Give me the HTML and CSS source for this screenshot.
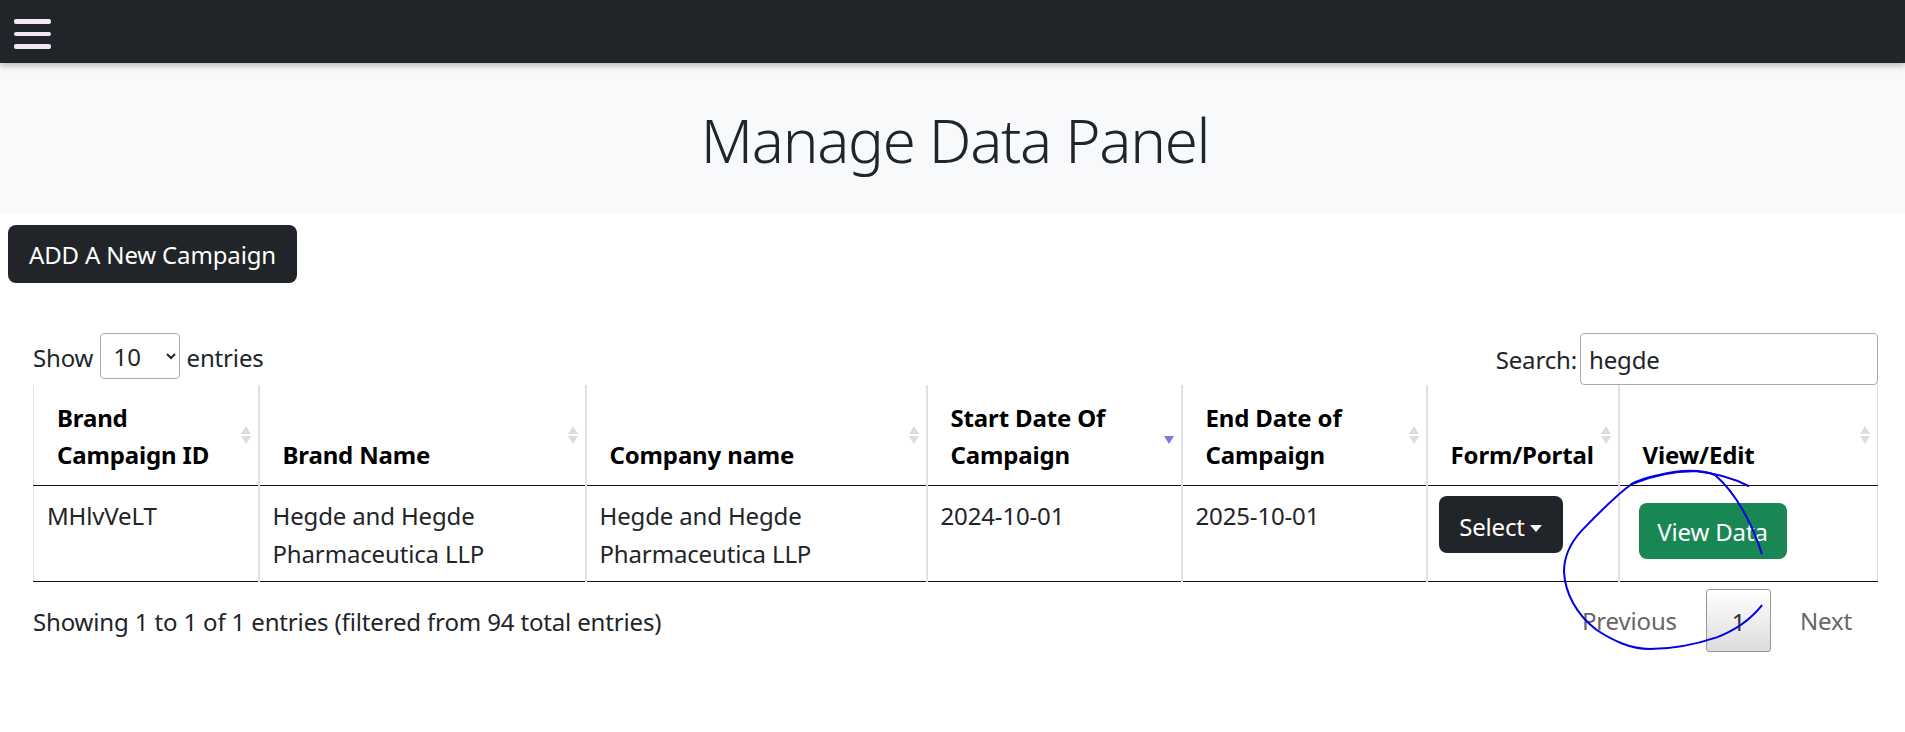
FILE: index.html
```html
<!DOCTYPE html>
<html lang="en">
<head>
  <meta charset="UTF-8">
  <meta name="viewport" content="width=device-width, initial-scale=1.0">
  <title>Manage Data Panel</title>
  <link rel="stylesheet" href="styles.css">
</head>
<body>
  <nav class="topbar">
    <button class="menu-toggle" type="button" aria-label="Menu">
      <span></span>
      <span></span>
      <span></span>
    </button>
  </nav>

  <header class="hero">
    <h1>Manage Data Panel</h1>
  </header>

  <a class="btn btn-dark btn-add" href="#">ADD A New Campaign</a>

  <section class="table-wrapper">
    <div class="table-top">
      <label class="length">Show
        <select>
          <option>10</option>
          <option>25</option>
          <option>50</option>
        </select>
        entries</label>
      <label class="search">Search:
        <input type="search" value="hegde">
      </label>
    </div>

    <table class="data-table">
      <thead>
        <tr>
          <th class="sorting col-id">Brand<br>Campaign ID</th>
          <th class="sorting col-brand">Brand Name</th>
          <th class="sorting col-company">Company name</th>
          <th class="sorting sorting-desc col-start">Start Date Of<br>Campaign</th>
          <th class="sorting col-end">End Date of<br>Campaign</th>
          <th class="sorting col-form">Form/Portal</th>
          <th class="sorting col-view">View/Edit</th>
        </tr>
      </thead>
      <tbody>
        <tr>
          <td>MHlvVeLT</td>
          <td>Hegde and Hegde<br>Pharmaceutica LLP</td>
          <td>Hegde and Hegde<br>Pharmaceutica LLP</td>
          <td>2024-10-01</td>
          <td>2025-10-01</td>
          <td class="cell-select"><button class="btn btn-dark btn-select" type="button">Select<i class="caret"></i></button></td>
          <td class="cell-view"><a class="btn btn-success" href="#">View Data</a></td>
        </tr>
      </tbody>
    </table>

    <div class="table-bottom">
      <div class="info">Showing 1 to 1 of 1 entries (filtered from 94 total entries)</div>
      <div class="paginate">
        <a class="page-link" href="#">Previous</a>
        <a class="page-link current" href="#">1</a>
        <a class="page-link" href="#">Next</a>
      </div>
    </div>
  </section>

  <svg class="scribble" viewBox="0 0 1515 1020" aria-hidden="true">
    <path d="M1085 700 C1060 620 1010 520 945 465 C900 448 840 450 780 464 C740 472 715 480 695 492 C650 525 590 585 545 632 C510 670 492 710 492 755 C495 820 530 885 590 930 C640 962 690 987 750 987 C820 987 890 972 950 952 C1010 930 1050 900 1085 857"/>
    <path d="M1045 498 C1000 475 950 460 890 454 C820 452 750 470 695 492"/>
  </svg>
</body>
</html>
```

FILE: styles.css
```css
* {
  box-sizing: border-box;
}
body {
  margin: 0;
  font-family: "Noto Sans", "Open Sans", Arial, sans-serif;
  font-size: 24px;
  line-height: 38px;
  color: #212529;
  background: #fff;
  letter-spacing: -0.15px;
  overflow: hidden;
}

.topbar {
  height: 63px;
  background: #212529;
  padding: 19px 0 0 14px;
  box-shadow: 0 3px 6px rgba(0, 0, 0, 0.25);
  position: relative;
}
.menu-toggle {
  display: flex;
  flex-direction: column;
  gap: 8px;
  width: 37px;
  padding: 0;
  border: none;
  background: none;
}
.menu-toggle span {
  display: block;
  height: 4.5px;
  border-radius: 2px;
  background: #f5e6f7;
}

.hero {
  height: 150px;
  padding: 4px 0 0 5px;
  background: #f8f9fa;
  display: flex;
  align-items: center;
  justify-content: center;
}
.hero h1 {
  margin: 0;
  font-size: 60px;
  line-height: 80px;
  font-weight: 300;
  letter-spacing: -1.3px;
}

.btn {
  display: inline-block;
  border: none;
  border-radius: 8px;
  color: #fff;
  text-decoration: none;
  font: inherit;
  letter-spacing: inherit;
}
.btn-dark {
  background: #212529;
}
.btn-success {
  background: #198754;
}
.btn-add {
  display: block;
  width: 289px;
  height: 58px;
  margin: 12px 0 0 8px;
  line-height: 60px;
  text-align: center;
}

.table-wrapper {
  padding: 50px 27px 0 33px;
}
.table-top {
  display: flex;
  justify-content: space-between;
  height: 52px;
}
.length select {
  width: 80px;
  height: 46px;
  margin: 0 0 0 1px;
  padding: 0 4px 0 8px;
  border: 1px solid #aaa;
  border-radius: 4px;
  background: #fff;
  color: #212529;
  font: inherit;
  vertical-align: 1px;
}
.search {
  display: flex;
  gap: 3px;
  line-height: 54px;
}
.search input {
  width: 298px;
  height: 52px;
  padding: 2px 8px 0;
  border: 1px solid #aaa;
  border-radius: 4px;
  color: #212529;
  font: inherit;
  letter-spacing: inherit;
}

.data-table {
  width: 100%;
  table-layout: fixed;
  border-collapse: collapse;
}
.data-table th {
  position: relative;
  height: 100px;
  padding: 10px 20px 12px 23px;
  line-height: 37px;
  vertical-align: bottom;
  text-align: left;
  color: #000;
  font-weight: 700;
  border-left: 2px solid #dee2e6;
  border-bottom: 1px solid #111;
  white-space: nowrap;
}
.data-table td {
  height: 96px;
  padding: 11px 13px 8px;
  vertical-align: top;
  border-left: 2px solid #dee2e6;
  border-bottom: 1px solid #111;
  color: #212529;
}
.data-table th:first-child,
.data-table td:first-child {
  border-left-width: 1px;
}
.data-table th:last-child,
.data-table td:last-child {
  border-right: 1px solid #dee2e6;
}
.col-id { width: 225px; }
.col-brand { width: 327px; }
.col-company { width: 341px; }
.col-start { width: 255px; }
.col-end { width: 245px; }
.col-form { width: 192px; }

.sorting::before,
.sorting::after {
  content: "";
  position: absolute;
  right: 7px;
  border-left: 5px solid transparent;
  border-right: 5px solid transparent;
}
.sorting::before {
  top: 41px;
  border-bottom: 8px solid #ddd;
}
.sorting::after {
  top: 51px;
  border-top: 8px solid #ddd;
}
.sorting-desc::before {
  border-bottom-color: transparent;
}
.sorting-desc::after {
  border-top-color: #7a7ad8;
}

.data-table .cell-select {
  padding: 10px 11px;
}
.btn-select {
  width: 124px;
  height: 57px;
  line-height: 57px;
  padding: 2px 0 0;
}
.caret {
  display: inline-block;
  margin-left: 5px;
  vertical-align: 4px;
  border-top: 7px solid #fff;
  border-left: 6.5px solid transparent;
  border-right: 6.5px solid transparent;
}
.data-table .cell-view {
  padding: 17px 19px;
}
.btn-success {
  display: block;
  width: 148px;
  height: 56px;
  line-height: 58px;
  text-align: center;
}

.table-bottom {
  display: flex;
  justify-content: space-between;
  padding-top: 7px;
}
.info {
  padding-top: 14px;
}
.paginate {
  display: flex;
  gap: 0;
  padding-right: 26px;
}
.page-link {
  color: #666;
  text-decoration: none;
  line-height: 63px;
}
.page-link.current {
  width: 65px;
  height: 63px;
  margin: 0 29px;
  border: 1px solid #979797;
  border-radius: 3px;
  background: linear-gradient(to bottom, #fff 0%, #dcdcdc 100%);
  color: #333;
  text-align: center;
}

.scribble {
  position: absolute;
  left: 1400px;
  top: 320px;
  width: 505px;
  height: 340px;
  fill: none;
  stroke: #0000e6;
  stroke-width: 6;
  stroke-linecap: round;
  pointer-events: none;
}
```
